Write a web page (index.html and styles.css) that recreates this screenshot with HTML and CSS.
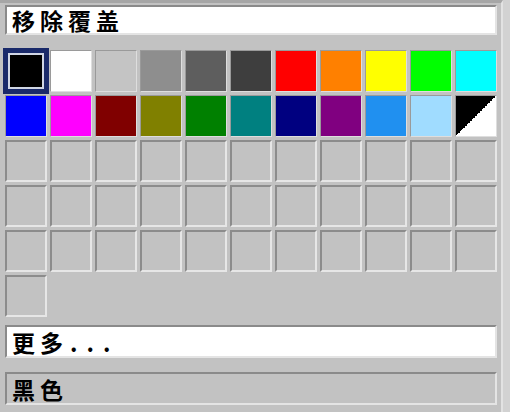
FILE: index.html
```html
<!DOCTYPE html>
<html lang="zh-CN">

<head>
    <meta charset="UTF-8">
    <meta name="viewport" content="width=device-width, initial-scale=1.0">
    <title>颜色</title>
    <link rel="stylesheet" href="styles.css">
</head>

<body>

    <div class="panel">
        <div class="field">移除覆盖</div>

        <div class="palette">
            <div class="swatch selected" style="background-color: #000000"></div>
            <div class="swatch" style="background-color: #ffffff"></div>
            <div class="swatch" style="background-color: #c4c4c4"></div>
            <div class="swatch" style="background-color: #8e8e8e"></div>
            <div class="swatch" style="background-color: #5e5e5e"></div>
            <div class="swatch" style="background-color: #3e3e3e"></div>
            <div class="swatch" style="background-color: #ff0000"></div>
            <div class="swatch" style="background-color: #ff8000"></div>
            <div class="swatch" style="background-color: #ffff00"></div>
            <div class="swatch" style="background-color: #00ff00"></div>
            <div class="swatch" style="background-color: #00ffff"></div>

            <div class="swatch" style="background-color: #0000ff"></div>
            <div class="swatch" style="background-color: #ff00ff"></div>
            <div class="swatch" style="background-color: #800000"></div>
            <div class="swatch" style="background-color: #808000"></div>
            <div class="swatch" style="background-color: #008000"></div>
            <div class="swatch" style="background-color: #008080"></div>
            <div class="swatch" style="background-color: #000080"></div>
            <div class="swatch" style="background-color: #800080"></div>
            <div class="swatch" style="background-color: #2090f0"></div>
            <div class="swatch" style="background-color: #a0dcff"></div>
            <div class="swatch split"></div>

            <div class="swatch empty"></div>
            <div class="swatch empty"></div>
            <div class="swatch empty"></div>
            <div class="swatch empty"></div>
            <div class="swatch empty"></div>
            <div class="swatch empty"></div>
            <div class="swatch empty"></div>
            <div class="swatch empty"></div>
            <div class="swatch empty"></div>
            <div class="swatch empty"></div>
            <div class="swatch empty"></div>

            <div class="swatch empty"></div>
            <div class="swatch empty"></div>
            <div class="swatch empty"></div>
            <div class="swatch empty"></div>
            <div class="swatch empty"></div>
            <div class="swatch empty"></div>
            <div class="swatch empty"></div>
            <div class="swatch empty"></div>
            <div class="swatch empty"></div>
            <div class="swatch empty"></div>
            <div class="swatch empty"></div>

            <div class="swatch empty"></div>
            <div class="swatch empty"></div>
            <div class="swatch empty"></div>
            <div class="swatch empty"></div>
            <div class="swatch empty"></div>
            <div class="swatch empty"></div>
            <div class="swatch empty"></div>
            <div class="swatch empty"></div>
            <div class="swatch empty"></div>
            <div class="swatch empty"></div>
            <div class="swatch empty"></div>

            <div class="swatch empty"></div>
        </div>

        <div class="field more">更多<span class="dots">...</span></div>

        <div class="field name">黑色</div>
    </div>

</body>

</html>
```

FILE: styles.css
```css
body {
    margin: 0;
    padding: 0;
    background-color: #d2d2d2;
    font-family: "Noto Sans CJK SC", "Noto Sans", sans-serif;
}

/* Panel */
.panel {
    width: 492px;
    height: 407px;
    padding: 2px 4px 0 5px;
    background-color: #c2c2c2;
    border-top: 3px solid #a6a6a6;
    border-right: 2px solid #e2e2e2;
}

/* Text boxes */
.field {
    box-sizing: border-box;
    display: flex;
    align-items: center;
    height: 30px;
    padding: 0 5px;
    background-color: #ffffff;
    border-top: 2px solid #8a8a8a;
    border-left: 2px solid #8a8a8a;
    border-bottom: 2px solid #e4e4e4;
    border-right: 2px solid #e4e4e4;
    color: #000;
    font-size: 23px;
    font-weight: bold;
    line-height: 26px;
    letter-spacing: 5px;
    white-space: nowrap;
}

.field.more {
    margin-top: 8px;
    height: 33px;
}

.field.name {
    margin-top: 14px;
    height: 33px;
    background-color: #c2c2c2;
}

.dots {
    margin-left: 2px;
    letter-spacing: 9px;
}

/* Colour grid */
.palette {
    display: grid;
    grid-template-columns: repeat(11, 42px);
    grid-auto-rows: 42px;
    gap: 3px;
    margin-top: 15px;
}

.swatch {
    box-sizing: border-box;
    border-top: 1px solid #9a9a9a;
    border-left: 1px solid #9a9a9a;
    border-bottom: 1px solid #dedede;
    border-right: 1px solid #dedede;
}

.swatch.empty {
    background-color: #c2c2c2;
    border-top: 2px solid #8c8c8c;
    border-left: 2px solid #8c8c8c;
    border-bottom: 2px solid #e6e6e6;
    border-right: 2px solid #e6e6e6;
}

.swatch.split {
    background: linear-gradient(to bottom right, #000000 50%, #ffffff 50%);
}

.swatch.selected {
    border: 3px solid #1a2a6a;
    box-shadow: 0 0 0 2px #1a2a6a, inset 0 0 0 2px #d0d6e4;
}
```
